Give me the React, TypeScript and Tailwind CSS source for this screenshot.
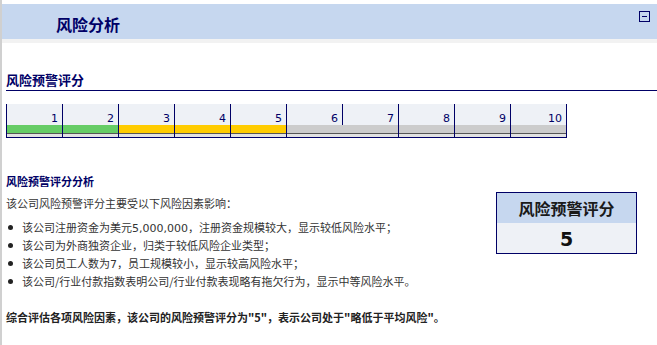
import type { ReactNode } from "react";

const cells = [
  { n: 1, bar: "bg-[#66cc66]" },
  { n: 2, bar: "bg-[#66cc66]" },
  { n: 3, bar: "bg-[#ffcc00]" },
  { n: 4, bar: "bg-[#ffcc00]" },
  { n: 5, bar: "bg-[#ffcc00]" },
  { n: 6, bar: "bg-[#cccccc]" },
  { n: 7, bar: "bg-[#cccccc]" },
  { n: 8, bar: "bg-[#cccccc]" },
  { n: 9, bar: "bg-[#cccccc]" },
  { n: 10, bar: "bg-[#cccccc]" },
];

const Num = ({ children }: { children: ReactNode }) => (
  <span className="leading-none font-['DejaVu_Sans',sans-serif]">{children}</span>
);

const factors: { id: number; content: ReactNode }[] = [
  { id: 1, content: <>该公司注册资金为美元<Num>5,000,000</Num>，注册资金规模较大，显示较低风险水平；</> },
  { id: 2, content: "该公司为外商独资企业，归类于较低风险企业类型；" },
  { id: 3, content: <>该公司员工人数为<Num>7</Num>，员工规模较小，显示较高风险水平；</> },
  { id: 4, content: "该公司/行业付款指数表明公司/行业付款表现略有拖欠行为，显示中等风险水平。" },
];

function App() {
  return (
    <div className="w-[657px] h-[345px] overflow-hidden bg-white border-l-2 border-[#d0d0d0] pt-[4px] font-['Noto_Sans_CJK_SC',sans-serif]">
      {/* header */}
      <div className="h-[35px] bg-[#c6d7ef] flex justify-between items-start">
        <h1 className="ml-[54px] mt-[10px] text-[16px] leading-[20px] font-bold text-[#000066]">风险分析</h1>
        <div className="mt-[7px] mr-[7px] w-[11px] h-[11px] border border-[#000066] flex items-center justify-center">
          <div className="w-[5px] h-[1px] bg-[#000066]" />
        </div>
      </div>
      <div className="h-[4px] bg-[#f2f2f2]" />

      <div className="pl-[4px]">
        <h2 className="mt-[29px] pb-[2px] border-b border-[#000066] text-[13px] leading-[16px] font-bold text-[#000066]">
          风险预警评分
        </h2>

        {/* score scale */}
        <div className="mt-[13px] flex w-fit border-l border-b border-[#000066] font-['DejaVu_Sans',sans-serif]">
          {cells.map((c, i) => (
            <div key={c.n} className="w-[56px] flex flex-col">
              <div className="h-[21px] bg-[#eef1f6] border-r border-[#000066] flex items-end justify-end pr-[4px] pb-[1px]">
                <span className="text-[11px] leading-[10px] text-[#000066]">{c.n}</span>
              </div>
              <div className={i === 5 ? "" : "border-r border-[#000066]"}>
                <div className={`h-[8px] ${c.bar}`} />
                <div className="h-[1px] bg-[#555555]" />
                <div className="h-[3px] bg-[#e2e2e2]" />
              </div>
            </div>
          ))}
        </div>

        <h3 className="mt-[36px] text-[11px] leading-[14px] font-bold text-[#000066]">风险预警评分分析</h3>

        <div className="flex justify-between">
          <div>
            <p className="mt-[6px] text-[11px] leading-[18px] text-[#333333]">该公司风险预警评分主要受以下风险因素影响：</p>
            <ul className="mt-[6px]">
              {factors.map((f) => (
                <li key={f.id} className="h-[18px] flex items-center text-[11px] leading-[18px] text-[#333333]">
                  <span className="w-[16px] pl-[2px] flex">
                    <span className="w-[5px] h-[5px] rounded-full bg-[#222222]" />
                  </span>
                  <span>{f.content}</span>
                </li>
              ))}
            </ul>
          </div>
          <div className="mt-[4px] mr-[20px] w-[141px] h-fit border border-[#000066]">
            <div className="h-[30px] bg-[#c6d7ef] flex items-center justify-center text-[16px] font-bold text-[#1a1a1a]">
              风险预警评分
            </div>
            <div className="h-[30px] bg-[#eef1f6] flex items-center justify-center pt-[3px] text-[19px] font-bold text-[#111111] font-['DejaVu_Sans',sans-serif]">
              5
            </div>
          </div>
        </div>

        <p className="mt-[18px] text-[11px] leading-[18px] font-bold text-[#222222]">
          综合评估各项风险因素，该公司的风险预警评分为"5"，表示公司处于"略低于平均风险"。
        </p>
      </div>
    </div>
  );
}

export default App;
